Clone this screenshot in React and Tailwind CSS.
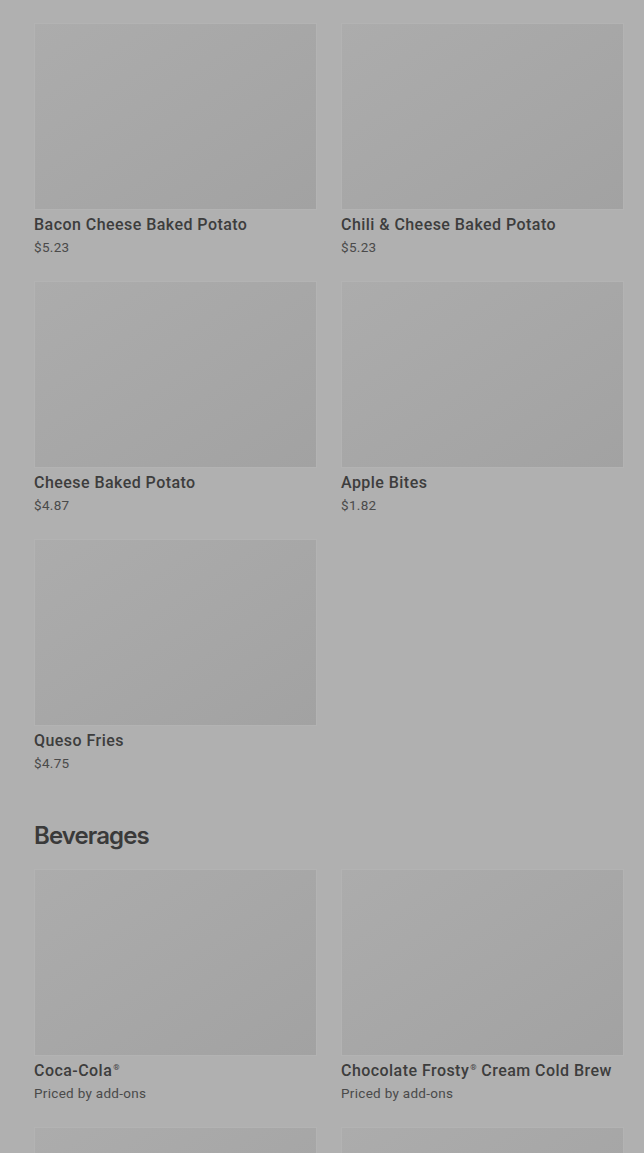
import React from "react";

const sides = [
  { name: "Bacon Cheese Baked Potato", price: "$5.23" },
  { name: "Chili & Cheese Baked Potato", price: "$5.23" },
  { name: "Cheese Baked Potato", price: "$4.87" },
  { name: "Apple Bites", price: "$1.82" },
  { name: "Queso Fries", price: "$4.75" },
];

const beverages = [
  { name: "Coca-Cola", reg: true, price: "Priced by add-ons" },
  { name: "Chocolate Frosty", reg: true, suffix: " Cream Cold Brew", price: "Priced by add-ons" },
  { name: "Sprite", reg: true, price: "Priced by add-ons" },
  { name: "Vanilla Frosty", reg: true, suffix: " Cream Cold Brew", price: "Priced by add-ons" },
];

function Card({ item }) {
  return (
    <div className="flex flex-col">
      <div className="h-[187px] border border-[#b3b3b3] bg-gradient-to-br from-[#acacac] to-[#a2a2a2]" />
      <p className="mt-[5px] h-[20px] text-[16px] leading-[20px] font-medium tracking-[0.45px] text-[#3d3d3d] whitespace-nowrap">
        {item.name}
        {item.reg && <span className="relative -top-[6px] ml-[1px] text-[8px] leading-none">®</span>}
        {item.suffix}
      </p>
      <p className="mt-[3px] text-[13.5px] leading-[18px] tracking-[0.3px] text-[#4a4a4a]">{item.price}</p>
    </div>
  );
}

export default function App() {
  return (
    <div
      className="h-[1153px] overflow-hidden bg-[#b0b0b0] pl-[34px] pr-[20px] pt-[23px]"
      style={{ fontFamily: "Roboto, 'Noto Sans', sans-serif" }}
    >
      <div className="grid grid-cols-2 gap-x-[24px] gap-y-[25px]">
        {sides.map((s, i) => (
          <Card key={i} item={s} />
        ))}
      </div>

      {/* Beverages */}
      <h2
        className="mt-[48px] mb-[17px] text-[24px] leading-[32px] font-semibold tracking-[-0.9px] text-[#3a3a3a]"
        style={{ fontFamily: "Inter, 'Noto Sans', sans-serif" }}
      >
        Beverages
      </h2>
      <div className="grid grid-cols-2 gap-x-[24px] gap-y-[25px]">
        {beverages.map((s, i) => (
          <Card key={i} item={s} />
        ))}
      </div>
    </div>
  );
}
